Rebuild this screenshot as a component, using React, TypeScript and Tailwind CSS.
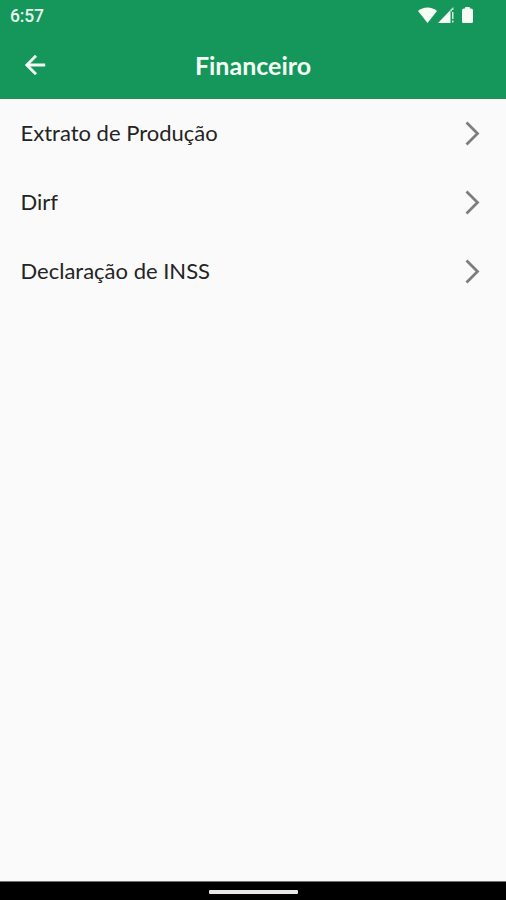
const items = ['Extrato de Produção', 'Dirf', 'Declaração de INSS']

function StatusBar() {
  return (
    <div className="flex h-[31px] items-center justify-between pl-[10px] pr-[33px]">
      <span className="pt-[3px] font-['Roboto',sans-serif] text-[17.5px] font-medium leading-none tracking-[-0.2px] text-[#e6f5ed]">6:57</span>
      <div className="flex items-center pb-px text-[#f7fcf4]">
        <svg width="19" height="16" viewBox="0 0 19 16" fill="currentColor">
          <path d="M0 4C5-.8 14-.8 19 4L9.500 16z" />
        </svg>
        {/* signal with the "no data" mark on its right edge */}
        <svg className="ml-px" width="17" height="16" viewBox="0 0 17 16" fill="currentColor">
          <path d="M0 16L12.500 3V16z" />
          <path d="M12 3L15.500 0V3H14V5z" opacity=".75" />
          <path d="M14 5H15.500V12H14zM14 13.500H15.500V15.500H14z" opacity=".85" />
        </svg>
        <svg className="ml-[7px]" width="11" height="16" viewBox="0 0 11 16" fill="currentColor">
          <path d="M3.200 0H7.800V1.500H9A2 2 0 0 1 11 3.500V14.500A1.500 1.500 0 0 1 9.500 16H1.500A1.500 1.500 0 0 1 0 14.500V3.500A2 2 0 0 1 2 1.500H3.200z" />
        </svg>
      </div>
    </div>
  )
}

export default function App() {
  return (
    <div className="flex h-[900px] w-[506px] flex-col overflow-hidden bg-[#fafafa] font-['Lato',sans-serif]">
      <header className="h-[99px] shrink-0 border-b border-[#2a8f55] bg-[#15965a] text-[#f4fcf5]">
        <StatusBar />
        <div className="grid h-[67px] grid-cols-[70px_1fr_70px] items-center">
          <button aria-label="Voltar" className="flex justify-center">
            <svg width="30" height="30" viewBox="0 0 24 24" fill="currentColor" stroke="currentColor" strokeWidth="0.35">
              <path d="M20 11H7.830l5.590-5.590L12 4l-8 8 8 8 1.410-1.410L7.830 13H20v-2z" />
            </svg>
          </button>
          <h1 className="pt-px text-center text-[25px] font-bold leading-none">Financeiro</h1>
        </div>
      </header>

      <ul className="flex-1">
        {items.map((label) => (
          <li key={label} className="flex h-[69px] items-center justify-between pl-[20.500px] pr-[26px]">
            <span className="pb-[2px] text-[22px] leading-none text-[#242424]">{label}</span>
            <svg width="15" height="25" viewBox="0 0 15 25" fill="none" stroke="#7d7d7d" strokeWidth="2.8">
              <path d="M1.500 1.500L12.500 12.500L1.500 23.500" />
            </svg>
          </li>
        ))}
      </ul>

      <footer className="flex h-[19px] shrink-0 items-center justify-center border-t border-[#6f6f6f] bg-black pt-px">
        <div className="h-1 w-[89px] rounded-[1px] bg-[#e9e5e9]" />
      </footer>
    </div>
  )
}
